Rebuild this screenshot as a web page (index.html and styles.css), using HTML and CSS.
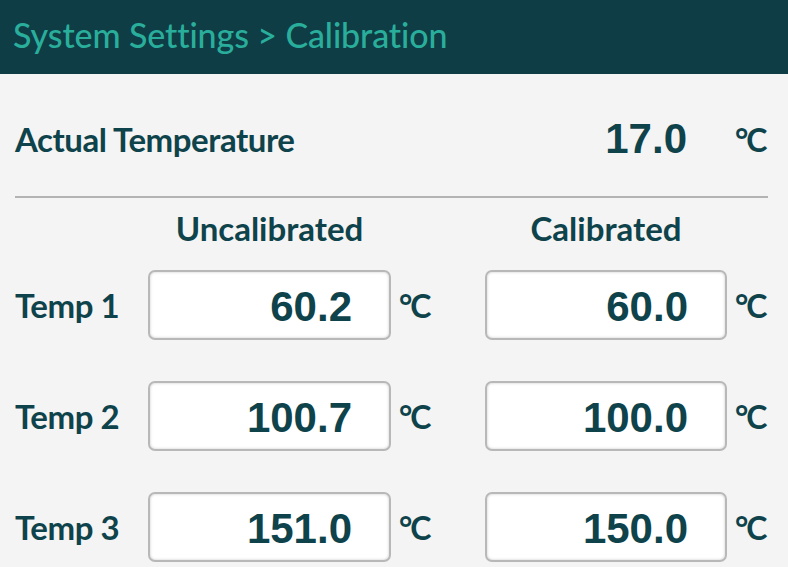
FILE: index.html
```html
<!DOCTYPE html>
<html>
<head>
<meta charset="utf-8">
<link rel="stylesheet" href="styles.css">
</head>
<body>
<header class="topbar"><h1 class="title">System Settings &gt; Calibration</h1></header>
<main class="panel">
  <div class="grid actual">
    <div class="label span3">Actual Temperature</div>
    <div class="value plain">17.0</div>
    <div class="unit">°C</div>
  </div>
  <hr class="divider">
  <div class="grid heads">
    <div></div>
    <div class="colhead">Uncalibrated</div>
    <div></div>
    <div class="colhead">Calibrated</div>
    <div></div>
  </div>
  <div class="grid rows">
    <div class="label">Temp 1</div>
    <div class="value box">60.2</div>
    <div class="unit">°C</div>
    <div class="value box">60.0</div>
    <div class="unit">°C</div>

    <div class="label">Temp 2</div>
    <div class="value box">100.7</div>
    <div class="unit">°C</div>
    <div class="value box">100.0</div>
    <div class="unit">°C</div>

    <div class="label">Temp 3</div>
    <div class="value box">151.0</div>
    <div class="unit">°C</div>
    <div class="value box">150.0</div>
    <div class="unit">°C</div>
  </div>
</main>
</body>
</html>
```

FILE: styles.css
```css
html, body {
  margin: 0;
  padding: 0;
  background: #f4f4f4;
  width: 788px;
  height: 567px;
  overflow: hidden;
}
body {
  font-family: Lato, "Noto Sans", sans-serif;
  color: #0f434b;
  font-variant-ligatures: none;
}
.topbar {
  height: 74px;
  background: #0e3d45;
  display: flex;
  align-items: center;
  padding: 0 0 4px 13px;
  box-sizing: border-box;
}
.title {
  margin: 0;
  font-family: Lato, "Noto Sans", sans-serif;
  font-weight: 500;
  font-size: 34px;
  letter-spacing: -0.1px;
  color: #2aae9c;
  line-height: 1.2;
}
.panel {
  padding: 0 20px 0 15px;
}
.grid {
  display: grid;
  grid-template-columns: 133px 243px 94px 242px 41px;
  align-items: center;
}
.actual {
  height: 122px;
  padding-top: 8px;
  box-sizing: border-box;
}
.span3 {
  grid-column: 1 / span 3;
}
.label {
  font-weight: 700;
  font-size: 33px;
  letter-spacing: -0.45px;
  white-space: nowrap;
}
.value {
  font-family: "Liberation Sans", Arial, sans-serif;
  font-weight: 700;
  font-size: 42px;
  text-align: right;
  padding-right: 39px;
}
.plain {
  padding-right: 40px;
}
.unit {
  font-weight: 700;
  font-size: 32px;
  padding-left: 8px;
  letter-spacing: -2px;
  white-space: nowrap;
}
.divider {
  margin: 0;
  border: 0;
  height: 2px;
  background: #b3b3b3;
  width: 753px;
}
.heads {
  height: 60px;
}
.colhead {
  text-align: center;
  font-weight: 700;
  font-size: 33px;
  letter-spacing: 0;
}
.rows {
  margin-top: 12px;
  grid-auto-rows: 70px;
  row-gap: 41px;
}
.box {
  height: 70px;
  box-sizing: border-box;
  background: #ffffff;
  border: 2px solid #b8b8b8;
  border-radius: 7px;
  box-shadow: inset 0 0 3px rgba(0, 0, 0, 0.22);
  display: flex;
  align-items: center;
  justify-content: flex-end;
  padding-top: 3px;
  padding-right: 37px;
}
```
